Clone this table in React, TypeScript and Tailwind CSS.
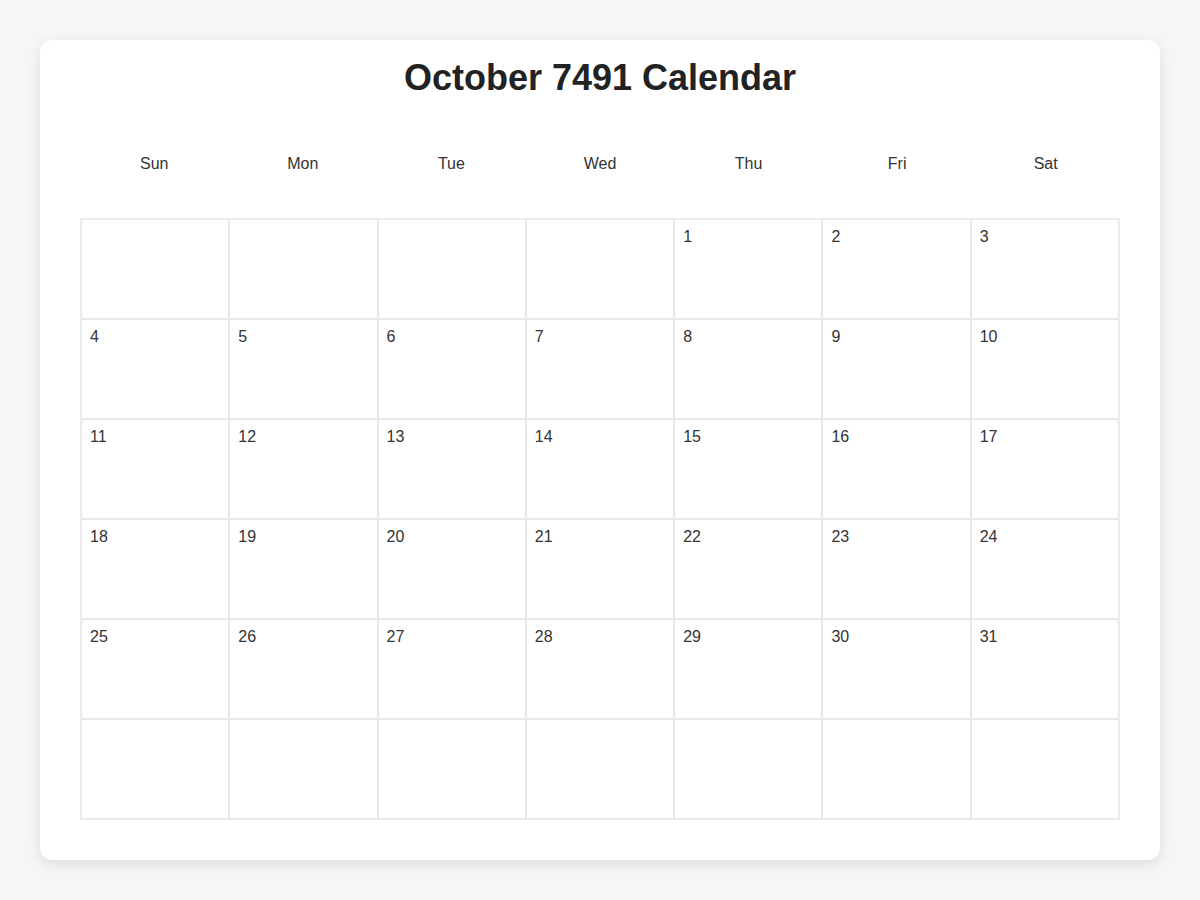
const days = ["Sun", "Mon", "Tue", "Wed", "Thu", "Fri", "Sat"];

// October 7491 starts on a Thursday
const cells: (number | null)[] = [
    ...Array(4).fill(null),
    ...Array.from({ length: 31 }, (_, i) => i + 1),
];
while (cells.length < 42) cells.push(null);

const App = () => {
    return (
        <main className="min-h-[900px] bg-[#f5f6f8] pt-10 font-['Liberation_Sans',Arial,sans-serif]">
            <div className="mx-10 w-[1120px] h-[820px] bg-white rounded-xl shadow-[0_4px_14px_rgba(0,0,0,0.1)] px-10 pt-[17px]">
                <h1 className="text-center text-[36px] leading-[42px] font-bold text-[#222]">October 7491 Calendar</h1>
                <div className="grid grid-cols-7 mt-[46px] h-[38px] items-center">
                    {days.map((d) => (
                        <p key={d} className="text-center text-base text-[#333]">{d}</p>
                    ))}
                </div>
                <div className="grid grid-cols-7 mt-[35px] border border-[#eeeeee]">
                    {cells.map((n, i) => (
                        <div key={i} className="h-[100px] border border-[#e8e8e8] px-2 pt-[5px] text-base text-[#333]">
                            {n}
                        </div>
                    ))}
                </div>
            </div>
        </main>
    );
};

export default App;
